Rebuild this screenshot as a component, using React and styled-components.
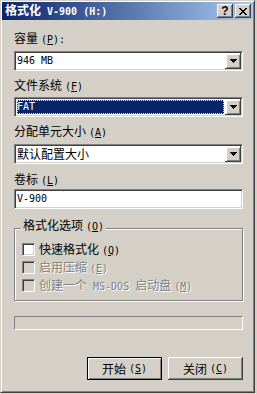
import React from "react";
import styled, { createGlobalStyle, css } from "styled-components";

const Global = createGlobalStyle`
  html, body { margin: 0; padding: 0; background: #d4d0c8; }
  body {
    font-family: "Noto Sans CJK SC", "DejaVu Sans", sans-serif;
    font-size: 12px;
    color: #000;
  }
  * { box-sizing: border-box; }
`;

const Window = styled.div`
  width: 255px;
  height: 393px;
  display: flex;
  flex-direction: column;
  background: #d4d0c8;
  border: 1px solid;
  border-color: #d4d0c8 #404040 #404040 #d4d0c8;
  box-shadow: inset 1px 1px #fff, inset -1px -1px #808080;
  padding: 1px;
`;

const TitleBar = styled.div`
  flex: none;
  height: 18px;
  display: flex;
  align-items: center;
  justify-content: space-between;
  padding: 0 2px 0 3px;
  background: linear-gradient(to right, #0a246a, #a6caf0);
`;

const Title = styled.div`
  color: #fff;
  font-weight: bold;
  font-size: 12px;
  line-height: 14px;
  white-space: nowrap;
`;

const CaptionGroup = styled.div`
  display: flex;
  gap: 2px;
`;

const CaptionButton = styled.div`
  width: 16px;
  height: 14px;
  display: flex;
  align-items: center;
  justify-content: center;
  background: #d4d0c8;
  box-shadow: inset -1px -1px #404040, inset 1px 1px #fff, inset -2px -2px #808080;
  font-family: "Liberation Sans", sans-serif;
  font-weight: 900;
  font-size: 12px;
  line-height: 12px;
  color: #000;
`;

const Mono = styled.span`
  font-family: "DejaVu Sans Mono", "Liberation Mono", monospace;
  font-size: 10px;
`;

const AccKey = styled(Mono)`
  margin-left: 3px;
`;

const Body = styled.div`
  flex: 1;
  display: flex;
  flex-direction: column;
  padding: 0 10px 0 12px;
`;

const Label = styled.div`
  margin-top: ${(p) => p.$mt}px;
  height: 14px;
  line-height: 14px;
  white-space: nowrap;
`;

const sunken = css`
  border: 1px solid;
  border-color: #808080 #fff #fff #808080;
  box-shadow: inset 1px 1px #404040, inset -1px -1px #d4d0c8;
  padding: 1px;
`;

const Combo = styled.div`
  ${sunken};
  margin-top: ${(p) => p.$mt}px;
  height: 20px;
  display: flex;
  background: #fff;
`;

const ComboValue = styled.div`
  flex: 1;
  margin: 1px;
  display: flex;
  align-items: center;
  line-height: 14px;
  white-space: nowrap;
  ${(p) =>
    p.$selected &&
    css`
      background: #0a246a;
      color: #fff;
      outline: 1px dotted #f5db95;
      outline-offset: -1px;
    `}
`;

const DropButton = styled.div`
  width: 16px;
  height: 16px;
  flex: none;
  display: flex;
  align-items: center;
  justify-content: center;
  background: #d4d0c8;
  box-shadow: inset -1px -1px #404040, inset 2px 2px #fff, inset -2px -2px #808080;
`;

const TextBox = styled.div`
  ${sunken};
  margin-top: ${(p) => p.$mt}px;
  height: 20px;
  background: #fff;
  display: flex;
  align-items: center;
  padding-left: 2px;
  line-height: 14px;
`;

const Group = styled.div`
  position: relative;
  margin-top: 19px;
  height: 73px;
  border: 1px solid #808080;
  box-shadow: inset 1px 1px #fff, 1px 1px #fff;
  padding: 14px 0 0 7px;
  display: flex;
  flex-direction: column;
  gap: 5px;
`;

const Legend = styled.span`
  position: absolute;
  top: -11px;
  left: 6px;
  padding: 0 2px;
  background: #d4d0c8;
  line-height: 14px;
  white-space: nowrap;
`;

const CheckRow = styled.div`
  display: flex;
  align-items: center;
  gap: 4px;
  height: 13px;
`;

const CheckBox = styled.div`
  width: 13px;
  height: 13px;
  flex: none;
  border: 1px solid;
  border-color: #808080 #fff #fff #808080;
  box-shadow: inset 1px 1px #404040, inset -1px -1px #d4d0c8;
  background: ${(p) => (p.$disabled ? "#d4d0c8" : "#fff")};
`;

const CheckText = styled.span`
  line-height: 14px;
  white-space: nowrap;
  color: ${(p) => (p.$disabled ? "#808080" : "#000")};
  text-shadow: ${(p) => (p.$disabled ? "1px 1px #fff" : "none")};
`;

const Progress = styled.div`
  margin-top: 15px;
  height: 14px;
  border: 1px solid;
  border-color: #808080 #fff #fff #808080;
`;

const ButtonRow = styled.div`
  margin-top: 27px;
  display: flex;
  justify-content: flex-end;
  gap: 6px;
`;

const Button = styled.button`
  width: 75px;
  height: 23px;
  padding: 0;
  margin: 0;
  font: inherit;
  color: #000;
  display: flex;
  align-items: center;
  justify-content: center;
  background: #d4d0c8;
  line-height: 14px;
  ${(p) =>
    p.$default
      ? css`
          border: 1px solid #000;
          box-shadow: inset 1px 1px #fff, inset -1px -1px #808080;
        `
      : css`
          border: none;
          box-shadow: inset -1px -1px #404040, inset 1px 1px #fff, inset -2px -2px #808080;
        `}
`;

const Acc = ({ k, after = "" }) => (
  <AccKey>
    (<u>{k}</u>){after}
  </AccKey>
);

const Arrow = () => (
  <svg width="7" height="4" viewBox="0 0 7 4" shapeRendering="crispEdges">
    <path d="M0 0h7v1H0z M1 1h5v1H1z M2 2h3v1H2z M3 3h1v1H3z" fill="#000" />
  </svg>
);

const CloseGlyph = () => (
  <svg width="8" height="7" viewBox="0 0 8 7" shapeRendering="crispEdges">
    <path
      d="M0 0h2v1H0z M6 0h2v1H6z M1 1h2v1H1z M5 1h2v1H5z M2 2h4v1H2z M3 3h2v1H3z M2 4h4v1H2z M1 5h2v1H1z M5 5h2v1H5z M0 6h2v1H0z M6 6h2v1H6z"
      fill="#000"
    />
  </svg>
);

export default function App() {
  return (
    <>
      <Global />
      <Window>
        <TitleBar>
          <Title>
            格式化<Mono> V-900 (H:)</Mono>
          </Title>
          <CaptionGroup>
            <CaptionButton>?</CaptionButton>
            <CaptionButton>
              <CloseGlyph />
            </CaptionButton>
          </CaptionGroup>
        </TitleBar>
        <Body>
          <Label $mt={11}>
            容量<Acc k="P" after=":" />
          </Label>
          <Combo $mt={6}>
            <ComboValue>
              <Mono>946 MB</Mono>
            </ComboValue>
            <DropButton>
              <Arrow />
            </DropButton>
          </Combo>

          <Label $mt={7}>
            文件系统<Acc k="F" />
          </Label>
          <Combo $mt={5}>
            <ComboValue $selected>
              <Mono>FAT</Mono>
            </ComboValue>
            <DropButton>
              <Arrow />
            </DropButton>
          </Combo>

          <Label $mt={7}>
            分配单元大小<Acc k="A" />
          </Label>
          <Combo $mt={6}>
            <ComboValue>默认配置大小</ComboValue>
            <DropButton>
              <Arrow />
            </DropButton>
          </Combo>

          <Label $mt={8}>
            卷标<Acc k="L" />
          </Label>
          <TextBox $mt={3}>
            <Mono>V-900</Mono>
          </TextBox>

          <Group>
            <Legend>
              格式化选项<Acc k="O" />
            </Legend>
            <CheckRow>
              <CheckBox />
              <CheckText>
                快速格式化<Acc k="Q" />
              </CheckText>
            </CheckRow>
            <CheckRow>
              <CheckBox $disabled />
              <CheckText $disabled>
                启用压缩<Acc k="E" />
              </CheckText>
            </CheckRow>
            <CheckRow>
              <CheckBox $disabled />
              <CheckText $disabled>
                创建一个<Mono> MS-DOS </Mono>启动盘<Acc k="M" />
              </CheckText>
            </CheckRow>
          </Group>

          <Progress />

          <ButtonRow>
            <Button $default>
              开始<Acc k="S" />
            </Button>
            <Button>
              关闭<Acc k="C" />
            </Button>
          </ButtonRow>
        </Body>
      </Window>
    </>
  );
}
